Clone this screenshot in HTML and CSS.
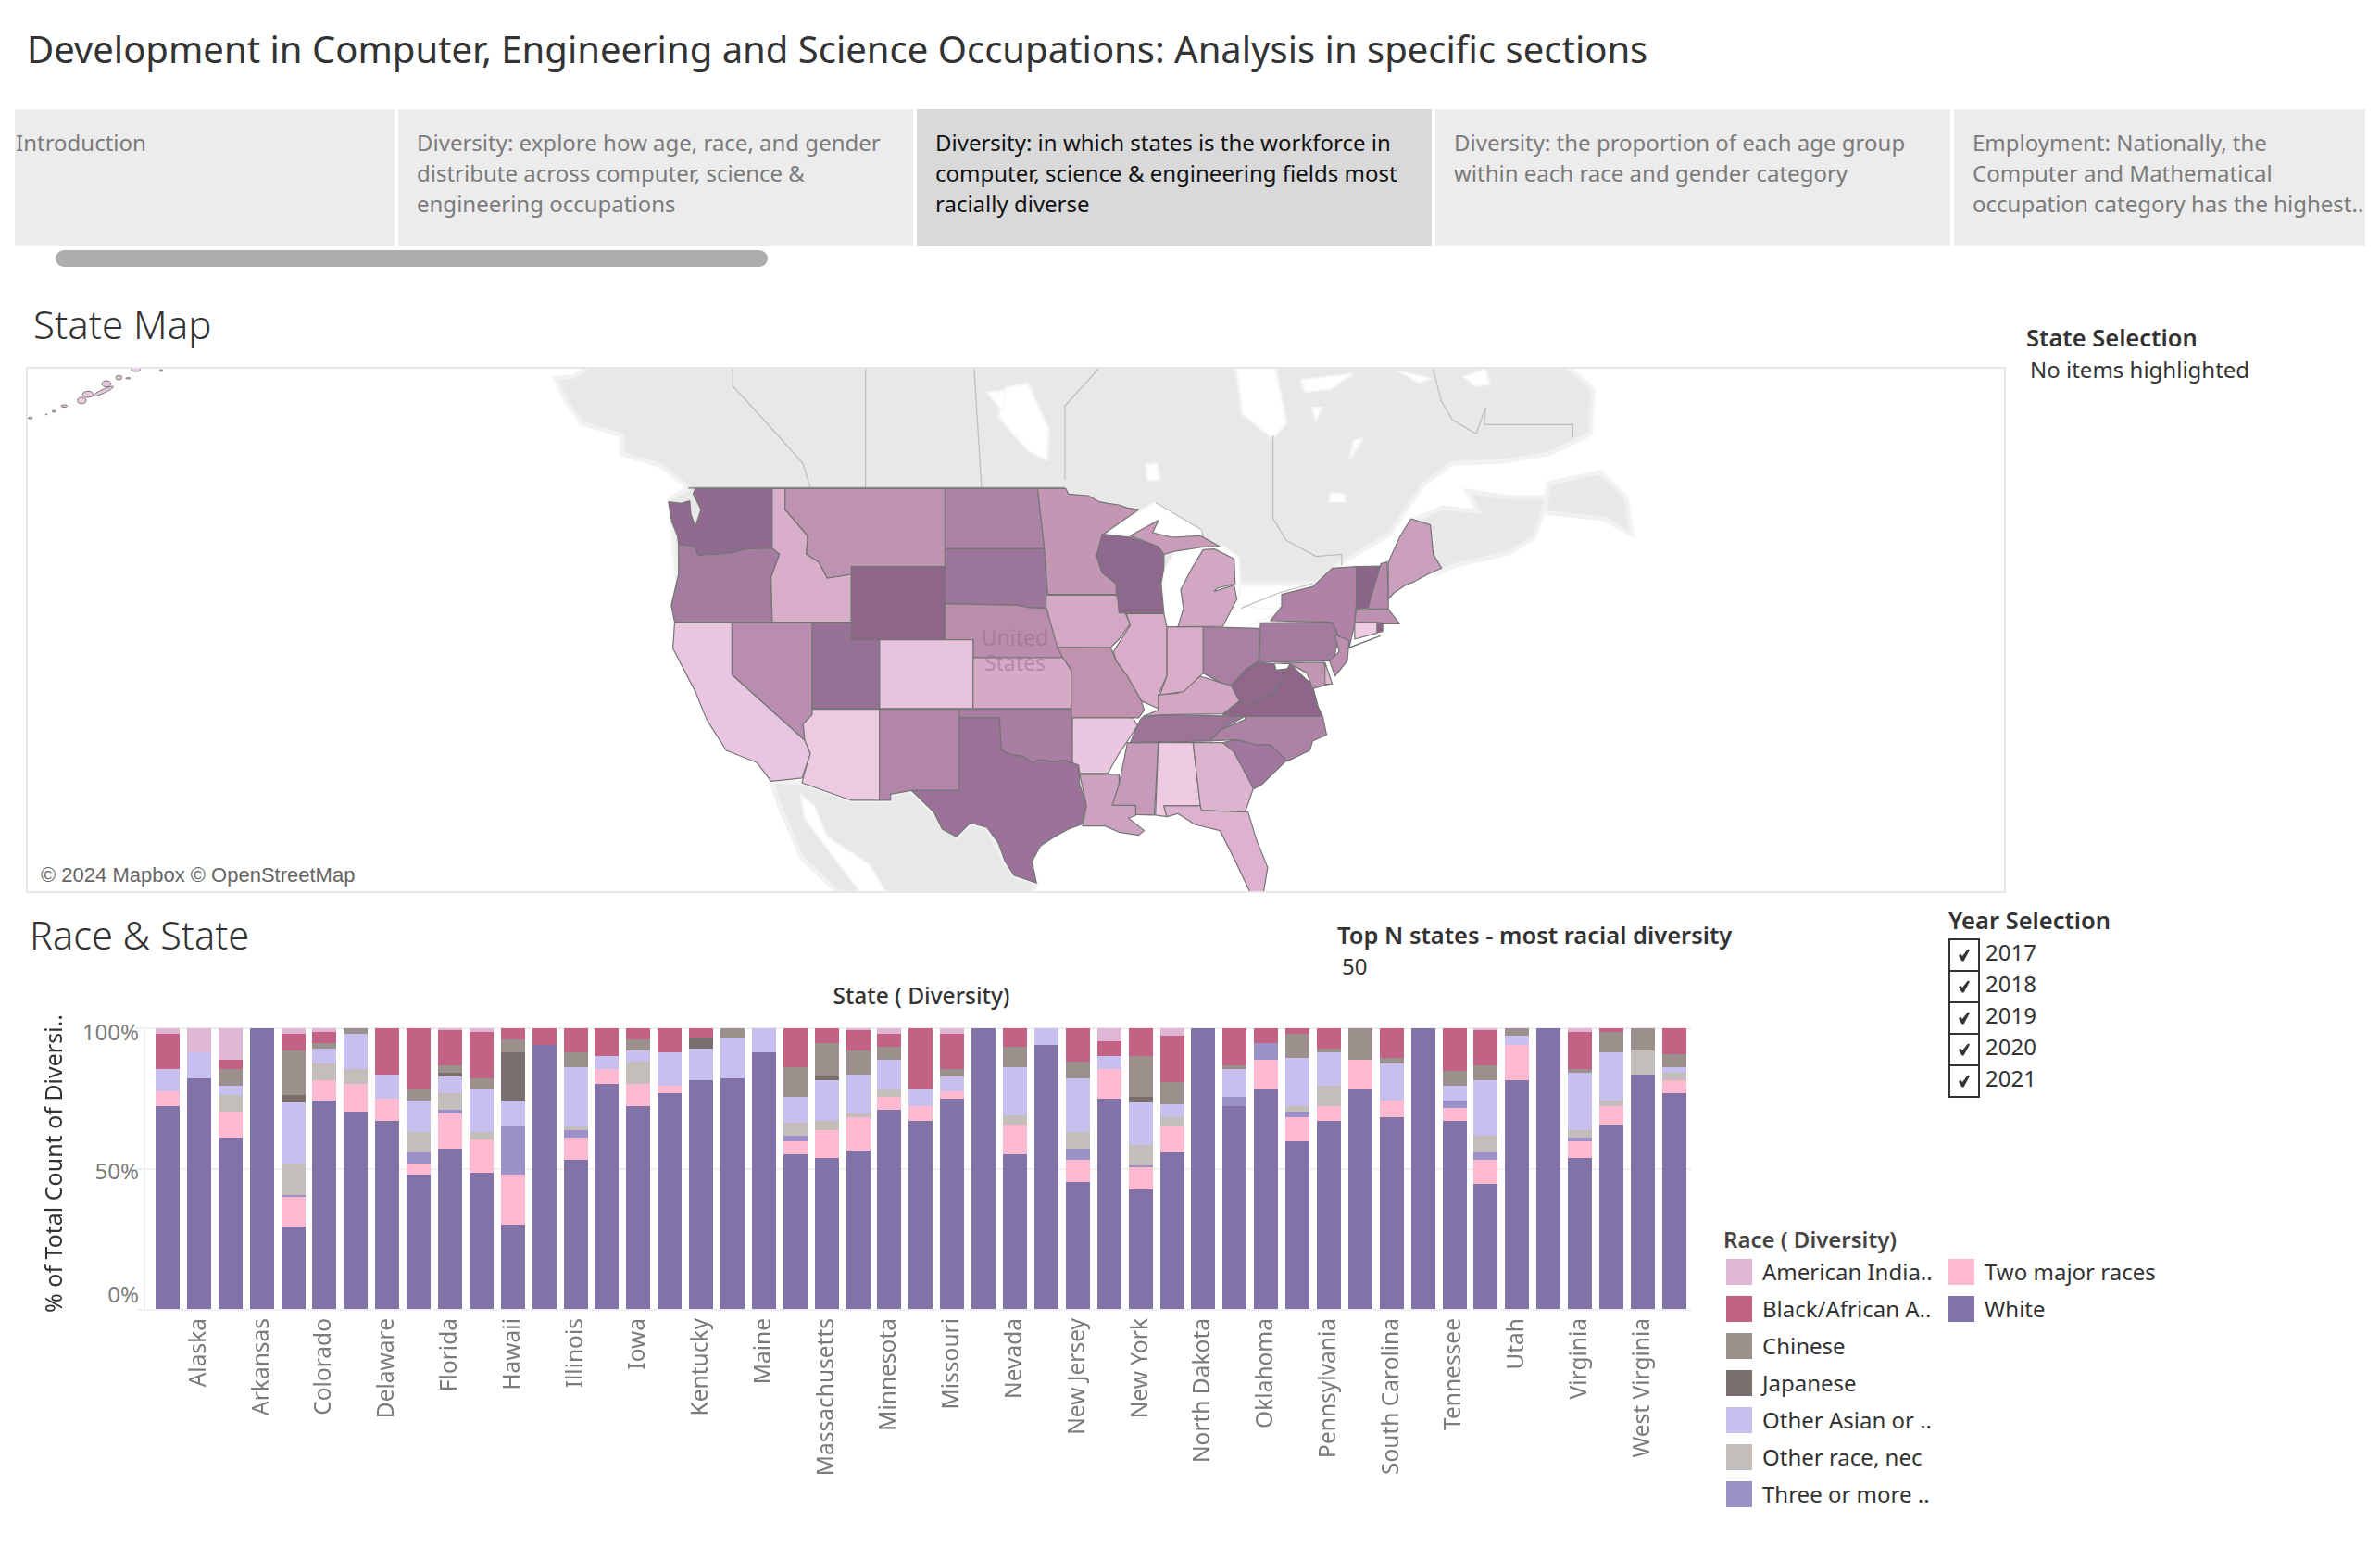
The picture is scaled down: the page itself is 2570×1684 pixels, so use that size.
FILE: index.html
```html
<!DOCTYPE html>
<html lang="en">
<head>
<meta charset="utf-8">
<title>Development in Computer, Engineering and Science Occupations</title>
<link rel="stylesheet" href="styles.css">
</head>
<body>
<div class="dash">
  <h1 class="title">Development in Computer, Engineering and Science Occupations: Analysis in specific sections</h1>
  <nav class="tabs">
    <a class="tab tab-1">Introduction</a>
    <a class="tab tab-2">Diversity: explore how age, race, and gender distribute across computer, science &amp; engineering occupations</a>
    <a class="tab tab-3 is-active">Diversity: in which states is the workforce in computer, science &amp; engineering fields most racially diverse</a>
    <a class="tab tab-4">Diversity: the proportion of each age group within each race and gender category</a>
    <a class="tab tab-5">Employment: Nationally, the Computer and Mathematical occupation category has the highest..</a>
  </nav>
  <div class="scroll-track"><div class="scroll-thumb"></div></div>

  <section class="map-section">
    <div class="map-col">
      <h2 class="heading">State Map</h2>
      <div class="map">
        <svg class="map-svg" viewBox="30 398 2134 564" xmlns="http://www.w3.org/2000/svg">
          <g class="base" transform="translate(560 390) scale(.7972 .3333)">
            <polygon class="land" points="50,55 75,50 95,15 1420,15 1455,90 1452,235 1395,300 1330,325 1265,330 1225,400 1195,505 1180,560 1110,660 1080,720 215,720 205,445 230,410 195,340 140,300 140,240 85,200 65,130"/>
            <polygon class="land" points="1215,512 1250,475 1300,485 1285,420 1340,440 1395,440 1375,570 1340,622 1270,660 1245,685 1235,625"/>
            <polygon class="land" points="1395,395 1465,360 1500,440 1508,560 1470,510 1390,490"/>
            <polygon class="water" points="660,85 690,72 718,220 716,320 690,290 650,180"/>
            <polygon class="water" points="972,20 1025,20 1040,200 1022,250 980,170"/>
            <polygon class="water" points="1060,60 1130,40 1100,90 1065,100"/>
            <polygon class="water" points="1190,30 1235,55 1220,70"/>
            <polygon class="water" points="1280,50 1310,25 1315,75 1295,80"/>
            <polygon class="water" points="850,335 865,330 868,385 852,385"/>
            <polygon class="water" points="1075,150 1088,150 1080,195"/>
            <polygon class="water" points="1132,255 1143,250 1125,320"/>
            <polygon class="water" points="635,100 660,95 655,160"/>
            <polygon class="water" points="1100,425 1118,430 1120,455 1098,455"/>
          </g>
          <g class="base" transform="translate(660 500) scale(.6059 .3333)">
            <polygon class="land" points="285,1030 340,1035 428,1092 498,1092 498,1072 535,1060 615,1210 640,1165 670,1180 702,1290 718,1335 758,1360 750,1392 405,1392 340,1280 300,1110"/>
            <polygon class="water" points="338,1075 362,1110 385,1210 460,1300 490,1392 445,1392 390,1260 345,1150"/>
            <polygon class="water" points="885,225 910,190 965,130 970,127 1052,215 1055,240 1000,240 965,225 975,185 925,235"/>
            <polygon class="water" points="980,360 1005,290 1050,270 1060,275 1035,340 1015,410 1020,470 1010,530 995,535 982,480 985,400"/>
            <polygon class="water" points="1060,272 1090,268 1118,305 1122,400 1116,455 1155,470 1190,470 1195,428 1250,395 1252,420 1200,440 1190,480 1115,548 1090,528 1110,440 1112,310"/>
          </g>
          <g transform="translate(560 390) scale(.7972 .3333)">
            <polyline class="border" points="290,20 290,80 340,210 385,330 395,408"/>
            <polyline class="border" points="470,20 470,408"/>
            <polyline class="border" points="617,20 627,408"/>
            <polyline class="border" points="787,20 740,145 740,385"/>
            <polyline class="border" points="1022,240 1022,510 1040,580 1080,632 1115,625 1115,662"/>
            <polyline class="border" points="1238,20 1250,130 1265,190 1297,235 1310,150 1308,205 1428,205 1428,245"/>
            <polyline class="border heavy" points="230,410 740,410"/>
          </g>
          <g transform="translate(660 500) scale(.6059 .3333)">
            <polyline class="border" points="970,127 1052,215 1056,240"/>
            <polyline class="border" points="1122,470 1190,420 1250,390"/>
            <polygon class="state" fill="#916a8f" points="150,82 287,82 287,275 240,278 215,290 185,295 155,298 148,270 120,262 118,235 108,190 102,125 125,130 140,122 142,165 150,205 160,150 146,100"/>
            <polygon class="state" fill="#a37c9f" points="120,262 148,270 155,298 185,295 215,290 240,278 287,275 300,295 285,370 287,515 113,515 107,460 120,360"/>
            <polygon class="state" fill="#d9aecb" points="287,82 310,82 310,150 350,235 348,295 370,320 385,372 428,360 428,515 287,515 285,370 300,295 287,275"/>
            <polygon class="state" fill="#be93b2" points="310,82 595,82 595,335 428,335 428,360 385,372 370,320 348,295 350,235 310,150"/>
            <polygon class="state" fill="#ab82a6" points="595,82 760,82 772,277 595,277"/>
            <polygon class="state" fill="#9c759b" points="595,277 772,277 778,430 775,468 745,468 725,460 595,455"/>
            <polygon class="state" fill="#8e6689" points="428,335 595,335 595,572 428,572"/>
            <polygon class="state" fill="#bb8dac" points="595,455 725,460 745,468 775,470 790,550 805,630 645,630 645,572 595,572"/>
            <polygon class="state" fill="#e6c2dd" points="478,572 645,572 645,795 478,795"/>
            <polygon class="state" fill="#d6aac7" points="645,630 805,630 820,670 820,795 645,795"/>
            <polygon class="state" fill="#987296" points="358,517 428,517 428,572 478,572 478,795 358,795"/>
            <polygon class="state" fill="#b98daf" points="215,517 358,517 358,815 342,845 345,898 215,685"/>
            <polygon class="state" fill="#e9c6e0" points="113,517 215,517 215,685 345,898 355,940 340,1020 285,1030 260,970 205,930 170,830 150,740 110,600"/>
            <polygon class="state" fill="#ebcae2" points="358,797 478,797 478,1092 428,1092 340,1035 345,1000 355,940 345,898 342,845 358,815"/>
            <polygon class="state" fill="#b286a9" points="478,797 620,797 620,1060 535,1060 498,1072 498,1092 478,1092"/>
            <polygon class="state" fill="#a87ea3" points="620,797 820,797 825,975 805,962 790,968 765,960 750,970 735,950 715,945 695,930 692,825 620,825"/>
            <polygon class="state" fill="#9b7398" points="620,825 692,825 695,930 715,945 735,950 750,970 765,960 790,968 805,962 833,978 835,1040 847,1110 838,1170 815,1185 790,1210 765,1240 750,1290 758,1360 718,1335 702,1290 690,1230 670,1180 640,1165 615,1210 590,1185 575,1130 535,1060 620,1060"/>
            <polygon class="state" fill="#c397b4" points="760,82 810,82 815,100 850,105 870,125 885,130 905,135 920,145 940,150 885,220 875,235 865,300 875,355 900,390 900,425 778,425 772,277"/>
            <polygon class="state" fill="#d3a8c5" points="775,427 900,427 925,520 905,570 890,597 795,595 775,465"/>
            <polygon class="state" fill="#c191b0" points="795,597 890,597 900,640 920,690 945,770 950,800 940,825 820,825 820,670 805,630"/>
            <polygon class="state" fill="#ebc6e0" points="822,825 930,825 938,850 920,900 905,940 885,1005 835,1005 833,978 822,970"/>
            <polygon class="state" fill="#cda1c0" points="835,1008 905,1008 905,1040 895,1108 935,1108 935,1140 922,1150 950,1190 940,1205 905,1195 880,1175 840,1175 847,1110"/>
            <polygon class="state" fill="#c69ab9" points="920,905 975,905 968,1140 935,1138 935,1108 893,1108 905,1040"/>
            <polygon class="state" fill="#efcae3" points="975,905 1037,905 1050,1110 985,1110 990,1145 970,1140"/>
            <polygon class="state" fill="#dcb4d0" points="1037,905 1090,905 1110,935 1145,1050 1130,1130 1052,1125 1050,1110"/>
            <polygon class="state" fill="#dfb1d1" points="985,1110 1050,1110 1052,1125 1135,1130 1150,1220 1170,1310 1162,1395 1140,1395 1110,1280 1085,1190 1040,1170 1010,1135 990,1145"/>
            <polygon class="state" fill="#a0789d" points="1090,905 1115,895 1150,912 1175,912 1205,960 1160,1040 1145,1055 1110,935"/>
            <polygon class="state" fill="#ad83a5" points="1130,820 1268,820 1275,880 1250,900 1245,930 1205,965 1175,912 1150,912 1115,895 1068,900 1085,865 1130,830"/>
            <polygon class="state" fill="#9c7498" points="945,825 980,815 1130,820 1085,865 1068,900 925,905 938,850"/>
            <polygon class="state" fill="#d3a6c4" points="948,820 975,800 975,750 1010,745 1050,690 1085,710 1105,720 1120,770 1090,812 980,815"/>
            <polygon class="state" fill="#8e6689" points="1090,815 1120,770 1135,785 1180,745 1210,650 1250,720 1260,790 1268,820 1130,820"/>
            <polygon class="state" fill="#8f688c" points="1105,720 1130,670 1152,645 1182,650 1185,670 1210,665 1180,745 1135,785 1120,770"/>
            <polygon class="state" fill="#a97fa2" points="1055,530 1155,535 1155,640 1130,670 1105,720 1085,710 1055,680"/>
            <polygon class="state" fill="#d9adca" points="990,530 1055,530 1055,680 1020,740 978,750 990,690"/>
            <polygon class="state" fill="#d9adca" points="918,487 985,487 990,530 990,690 975,750 975,795 945,770 920,690 900,640 895,610 925,525"/>
            <polygon class="state" fill="#8f698d" points="875,230 925,240 975,270 985,295 985,340 980,390 985,485 905,485 900,390 875,355 865,300"/>
            <polygon class="state" fill="#d2a7c3" points="1010,530 1020,470 1015,410 1035,340 1055,280 1075,278 1110,310 1112,390 1080,405 1075,415 1110,395 1115,440 1090,528"/>
            <polygon class="state" fill="#c99db9" points="925,235 975,185 965,225 1000,240 1050,235 1085,270 1060,270 1005,285 985,295 975,270"/>
            <polygon class="state" fill="#a27b9e" points="1157,517 1285,515 1297,560 1287,640 1155,645"/>
            <polygon class="state" fill="#af82a6" points="1175,510 1195,465 1195,425 1250,400 1285,340 1328,335 1328,450 1325,520 1315,600 1295,555 1285,515"/>
            <polygon class="state" fill="#8c6689" points="1328,335 1372,333 1350,470 1328,472"/>
            <polygon class="state" fill="#b789ab" points="1372,325 1383,320 1385,440 1385,472 1348,472"/>
            <polygon class="state" fill="#cba0be" points="1385,320 1405,240 1425,180 1460,200 1465,295 1480,340 1455,360 1430,385 1415,395 1395,420 1385,440"/>
            <polygon class="state" fill="#bd92b0" points="1328,475 1385,473 1405,520 1375,520 1365,515 1325,515"/>
            <polygon class="state" fill="#efcbe4" points="1325,515 1365,515 1365,550 1325,570"/>
            <polygon class="state" fill="#8e6689" points="1365,515 1375,518 1375,545 1365,548"/>
            <polygon class="state" fill="#bd8fae" points="1290,555 1315,575 1312,640 1290,690 1280,640 1297,610"/>
            <polygon class="state" fill="#be92b0" points="1310,600 1370,560 1320,595"/>
            <polygon class="state" fill="#c297b3" points="1182,648 1270,645 1280,715 1250,730 1240,680 1210,650"/>
            <polygon class="state" fill="#e0b7d3" points="1272,645 1285,715 1272,716"/>
          </g>
          <g transform="translate(20 385) scale(.3333)">
            <ellipse class="island" cx="380" cy="40" rx="15" ry="8"/>
            <ellipse class="island" cx="462" cy="45" rx="5" ry="3"/>
            <ellipse class="island" cx="355" cy="70" rx="8" ry="2"/>
            <ellipse class="island" cx="325" cy="68" rx="10" ry="7"/>
            <ellipse class="island" cx="285" cy="88" rx="15" ry="10"/>
            <ellipse class="island" cx="225" cy="122" rx="17" ry="10"/>
            <ellipse class="island" cx="205" cy="142" rx="14" ry="10"/>
            <ellipse class="island" cx="275" cy="112" rx="36" ry="6" transform="rotate(-25 275 112)"/>
            <ellipse class="island" cx="148" cy="160" rx="10" ry="4"/>
            <ellipse class="island" cx="115" cy="177" rx="6" ry="3"/>
            <ellipse class="island" cx="90" cy="187" rx="2" ry="2"/>
            <ellipse class="island" cx="38" cy="199" rx="7" ry="3"/>
          </g>
          <text class="country" text-anchor="middle" x="1096" y="697">United</text>
          <text class="country" text-anchor="middle" x="1096" y="724">States</text>
        </svg>
        <div class="attribution">© 2024 Mapbox © OpenStreetMap</div>
      </div>
    </div>
    <aside class="selection">
      <div class="filter-title">State Selection</div>
      <div class="selection-value">No items highlighted</div>
    </aside>
  </section>

  <section class="lower">
    <div class="lower-left">
      <div class="lower-head">
        <h2 class="heading race-heading">Race &amp; State</h2>
        <div class="topn">
          <div class="filter-title">Top N states - most racial diversity</div>
          <div class="topn-value">50</div>
        </div>
      </div>
      <div class="chart">
        <div class="chart-title">State ( Diversity)</div>
        <div class="chart-body">
          <div class="y-title">% of Total Count of Diversi..</div>
          <div class="y-ticks">
            <span class="y-tick y-100">100%</span>
            <span class="y-tick y-50">50%</span>
            <span class="y-tick y-0">0%</span>
          </div>
          <div class="plot">
            <div class="grid grid-100"></div>
            <div class="grid grid-50"></div>
            <div class="grid grid-0"></div>
            <div class="bars" id="bars"></div>
          </div>
        </div>
        <div class="x-labels" id="labels"></div>
      </div>
    </div>
    <div class="lower-right">
      <div class="year">
        <div class="filter-title">Year Selection</div>
        <ul class="year-list">
          <li class="year-row"><span class="check"><svg viewBox="0 0 14 14"><path d="M1 7.5 3 5.5 5 8 11 .5 13 1.5 6.5 13.5 4.5 13.5Z"/></svg></span>2017</li>
          <li class="year-row"><span class="check"><svg viewBox="0 0 14 14"><path d="M1 7.5 3 5.5 5 8 11 .5 13 1.5 6.5 13.5 4.5 13.5Z"/></svg></span>2018</li>
          <li class="year-row"><span class="check"><svg viewBox="0 0 14 14"><path d="M1 7.5 3 5.5 5 8 11 .5 13 1.5 6.5 13.5 4.5 13.5Z"/></svg></span>2019</li>
          <li class="year-row"><span class="check"><svg viewBox="0 0 14 14"><path d="M1 7.5 3 5.5 5 8 11 .5 13 1.5 6.5 13.5 4.5 13.5Z"/></svg></span>2020</li>
          <li class="year-row"><span class="check"><svg viewBox="0 0 14 14"><path d="M1 7.5 3 5.5 5 8 11 .5 13 1.5 6.5 13.5 4.5 13.5Z"/></svg></span>2021</li>
        </ul>
      </div>
      <div class="legend">
        <div class="legend-title">Race ( Diversity)</div>
        <ul class="legend-grid">
          <li class="legend-item"><span class="swatch c-A"></span>American India..</li>
          <li class="legend-item"><span class="swatch c-B"></span>Black/African A..</li>
          <li class="legend-item"><span class="swatch c-C"></span>Chinese</li>
          <li class="legend-item"><span class="swatch c-J"></span>Japanese</li>
          <li class="legend-item"><span class="swatch c-O"></span>Other Asian or ..</li>
          <li class="legend-item"><span class="swatch c-R"></span>Other race, nec</li>
          <li class="legend-item"><span class="swatch c-T"></span>Three or more ..</li>
          <li class="legend-item"><span class="swatch c-P"></span>Two major races</li>
          <li class="legend-item"><span class="swatch c-W"></span>White</li>
        </ul>
      </div>
    </div>
  </section>
</div>
<script src="chart.js"></script>
</body>
</html>
```

FILE: styles.css
```css
* { box-sizing: border-box; }
html, body { margin: 0; background: #fff; }
body { font-family: "Noto Sans", Lato, sans-serif; color: #333; }
ul { list-style: none; margin: 0; padding: 0; }

.dash { width: 2570px; height: 1684px; display: flex; flex-direction: column; overflow: hidden; }

.title { margin: 0; height: 118px; padding: 29px 0 0 29px; font-size: 40px; line-height: 48px; font-weight: 400; color: #333; }

.tabs { display: flex; gap: 4px; height: 148px; padding-left: 16px; }
.tab { height: 148px; padding: 19px 12px 0 20px; background: #ececec; color: #7b7b7b; font-size: 24px; line-height: 33px; }
.tab-1 { width: 410px; padding-left: 1px; }
.tab-2 { width: 556px; }
.tab-3 { width: 556px; }
.tab-4 { width: 556px; }
.tab-5 { width: 444px; padding-right: 0; }
.is-active { background: #d9d9d9; color: #111; }

.scroll-track { height: 22px; padding: 4px 0 0 60px; }
.scroll-thumb { width: 769px; height: 18px; border-radius: 9px; background: #adadad; }

.map-section { display: flex; height: 676px; }
.map-col { width: 2189px; padding-left: 28px; }
.heading { margin: 0; font-size: 41.5px; font-weight: 300; color: #333; }
.map-col .heading { height: 108px; padding: 37px 0 0 8px; line-height: 50px; font-size: 42px; }
.map { position: relative; width: 2138px; height: 568px; border: 2px solid #e6e6e6; background: #fff; }
.map-svg { display: block; width: 2134px; height: 564px; }
.base { filter: blur(1.2px); }
.land { fill: #e8e8e8; stroke: #f1f1f1; stroke-width: 5; vector-effect: non-scaling-stroke; }
.water { fill: #fff; stroke: #f6f6f6; stroke-width: 2; vector-effect: non-scaling-stroke; }
.border { fill: none; stroke: #bdbdbd; stroke-width: 1.2; vector-effect: non-scaling-stroke; }
.heavy { stroke: #999; stroke-width: 2; }
.state { stroke: #757575; stroke-width: 1.2; stroke-linejoin: round; vector-effect: non-scaling-stroke; }
.island { fill: #e8c8de; stroke: #777; stroke-width: 1; vector-effect: non-scaling-stroke; }
.country { font-family: "Noto Sans", Lato, sans-serif; font-size: 23px; fill: #9a6a8c; fill-opacity: .55; }
.attribution { position: absolute; left: 6px; bottom: 3px; width: 355px; height: 29px; padding-left: 8px; background: rgba(255,255,255,.82); color: #666; font-family: "Liberation Sans", sans-serif; font-size: 22px; line-height: 29px; white-space: nowrap; }

.selection { padding-top: 60px; margin-left: -1px; }
.filter-title { font-size: 25.5px; font-weight: 600; line-height: 32px; color: #333; white-space: nowrap; }
.selection-value { margin-top: 3px; padding-left: 4px; font-size: 24px; line-height: 32px; }

.lower { display: flex; flex: 1; }
.lower-left { width: 1861px; flex: none; }
.lower-head { display: flex; height: 91px; }
.race-heading { flex: none; width: 1444px; padding: 17px 0 0 32px; line-height: 56px; }
.topn { padding-top: 29px; }
.topn-value { margin-top: 2px; padding-left: 5px; font-size: 24px; line-height: 32px; }

.chart-title { height: 55px; width: 1990px; text-align: center; font-size: 24.5px; font-weight: 500; line-height: 40px; color: #333; }
.chart-body { display: flex; height: 303px; }
.y-title { width: 70px; padding-left: 44px; height: 320px; margin-top: -13px; writing-mode: vertical-rl; transform: rotate(180deg); transform-origin: 57px 160px; text-align: center; font-size: 25px; line-height: 26px; white-space: nowrap; color: #333; }
.y-ticks { position: relative; width: 85px; }
.y-tick { position: absolute; right: 5px; color: #7b7b7b; font-size: 24px; line-height: 30px; }
.y-100 { top: -11px; }
.y-50 { top: 139px; }
.y-0 { top: 272px; }
.plot { position: relative; width: 1671px; border-left: 2px solid #f3f3f3; }
.grid { position: absolute; left: -10px; right: 0; height: 2px; background: #f0f0f0; }
.grid-100 { top: -1px; }
.grid-50 { top: 151px; }
.grid-0 { bottom: -2px; }
.bars { position: relative; display: flex; gap: 7.9px; height: 303px; padding-left: 11px; }
.bar { display: flex; flex-direction: column; width: 26px; height: 303px; flex: none; }
.c-A { background: #dfb6d3; }
.c-B { background: #c46285; }
.c-C { background: #9b908c; }
.c-J { background: #7b6f6d; }
.c-O { background: #c7c0ee; }
.c-R { background: #c4bebb; }
.c-T { background: #9b91c8; }
.c-P { background: #ffb9d0; }
.c-W { background: #8173a7; }

.x-labels { display: flex; padding: 10px 0 0 162px; align-items: flex-start; }
.x-cell { width: 33.9px; flex: none; height: 230px; display: flex; justify-content: center; align-items: flex-start; }
.x-label { writing-mode: vertical-rl; transform: rotate(180deg); width: 26px; font-size: 24.5px; line-height: 26px; color: #7b7b7b; white-space: nowrap; }

.lower-right { width: 709px; display: flex; flex-direction: column; }
.year { padding: 13px 0 0 243px; }
.year-list { margin-top: 4px; }
.year-row { display: flex; align-items: flex-start; gap: 6px; height: 34px; font-size: 24px; line-height: 29px; color: #333; }
.check { display: flex; align-items: center; justify-content: center; width: 34px; height: 36px; border: 2px solid #333; }
.check svg { width: 14px; height: 14px; fill: #333; }
.legend { margin-top: 139px; }
.legend-title { font-size: 24px; font-weight: 600; line-height: 32px; color: #444; }
.legend-grid { display: grid; grid-auto-flow: column; grid-template-rows: repeat(7, 40px); grid-template-columns: 240px auto; margin-top: 5px; }
.legend-item { display: flex; gap: 11px; font-size: 24px; line-height: 28px; color: #333; white-space: nowrap; padding-left: 3px; }
.swatch { width: 28px; height: 28px; flex: none; }
```

FILE: chart.js
```js
var STATES = ["", "Alaska", "", "Arkansas", "", "Colorado", "", "Delaware", "", "Florida", "", "Hawaii", "", "Illinois", "", "Iowa", "", "Kentucky", "", "Maine", "", "Massachusetts", "", "Minnesota", "", "Missouri", "", "Nevada", "", "New Jersey", "", "New York", "", "North Dakota", "", "Oklahoma", "", "Pennsylvania", "", "South Carolina", "", "Tennessee", "", "Utah", "", "Virginia", "", "West Virginia", ""];
var DATA = ["A18 B132 O204 P252", "A78 O162", "A102 B132 C186 O216 R270 P354", "", "A18 B72 C216 J240 O438 R540 T546 P642", "A12 B48 C66 O114 R168 P234", "C18 O132 R180 P270", "B150 O228 P300", "B198 C234 O336 R402 T438 P474", "A6 B120 C144 J156 O210 R264 T276 P390", "A12 B162 C198 O336 R360 P468", "B36 C78 J234 O318 T474 P636", "B54", "B78 C126 O318 R330 T354 P426", "B90 O132 P180", "B36 C72 O108 R180 P252", "B78 O186 P210", "B30 J66 O168", "C30 O162", "O78", "B126 C222 O306 R348 T366 P408", "B48 C156 J168 O300 R330 P420", "A6 B72 C150 O276 R288 P396", "A18 B60 C102 O198 R222 P264", "B198 O252 P300", "A18 B132 C156 O204 P228", "", "B60 C126 O282 R312 P408", "O54", "B108 C162 O336 R390 T426 P498", "A42 B90 O132 P228", "B90 C222 J240 O378 R444 T450 P522", "A24 B174 C246 O288 R318 P402", "", "B120 C132 O222 T252", "B48 T102 P198", "B18 C96 O252 R270 T288 P366", "B66 C78 O186 R252 P300", "C102 P198", "B96 C114 O234 P288", "", "B138 C186 O234 T258 P300", "A6 B120 C168 O348 R402 T426 P504", "C24 O54 P168", "", "A12 B132 C144 O330 R354 T366 P420", "B12 C78 O234 R252 P312", "C72 R150", "B84 C126 O144 R168 P210"];
var TOTAL = 908;
var barsEl = document.getElementById("bars");
var labelsEl = document.getElementById("labels");
DATA.forEach(function (row, i) {
  var bar = document.createElement("div");
  bar.className = "bar";
  var prev = 0;
  (row ? row.split(" ") : []).concat(["W" + TOTAL]).forEach(function (part) {
    var end = parseInt(part.slice(1), 10);
    var seg = document.createElement("div");
    seg.className = "c-" + part[0];
    seg.style.height = ((end - prev) / TOTAL * 100) + "%";
    bar.appendChild(seg);
    prev = end;
  });
  barsEl.appendChild(bar);
  var cell = document.createElement("div");
  cell.className = "x-cell";
  if (STATES[i]) {
    var label = document.createElement("span");
    label.className = "x-label";
    label.textContent = STATES[i];
    cell.appendChild(label);
  }
  labelsEl.appendChild(cell);
});
```
